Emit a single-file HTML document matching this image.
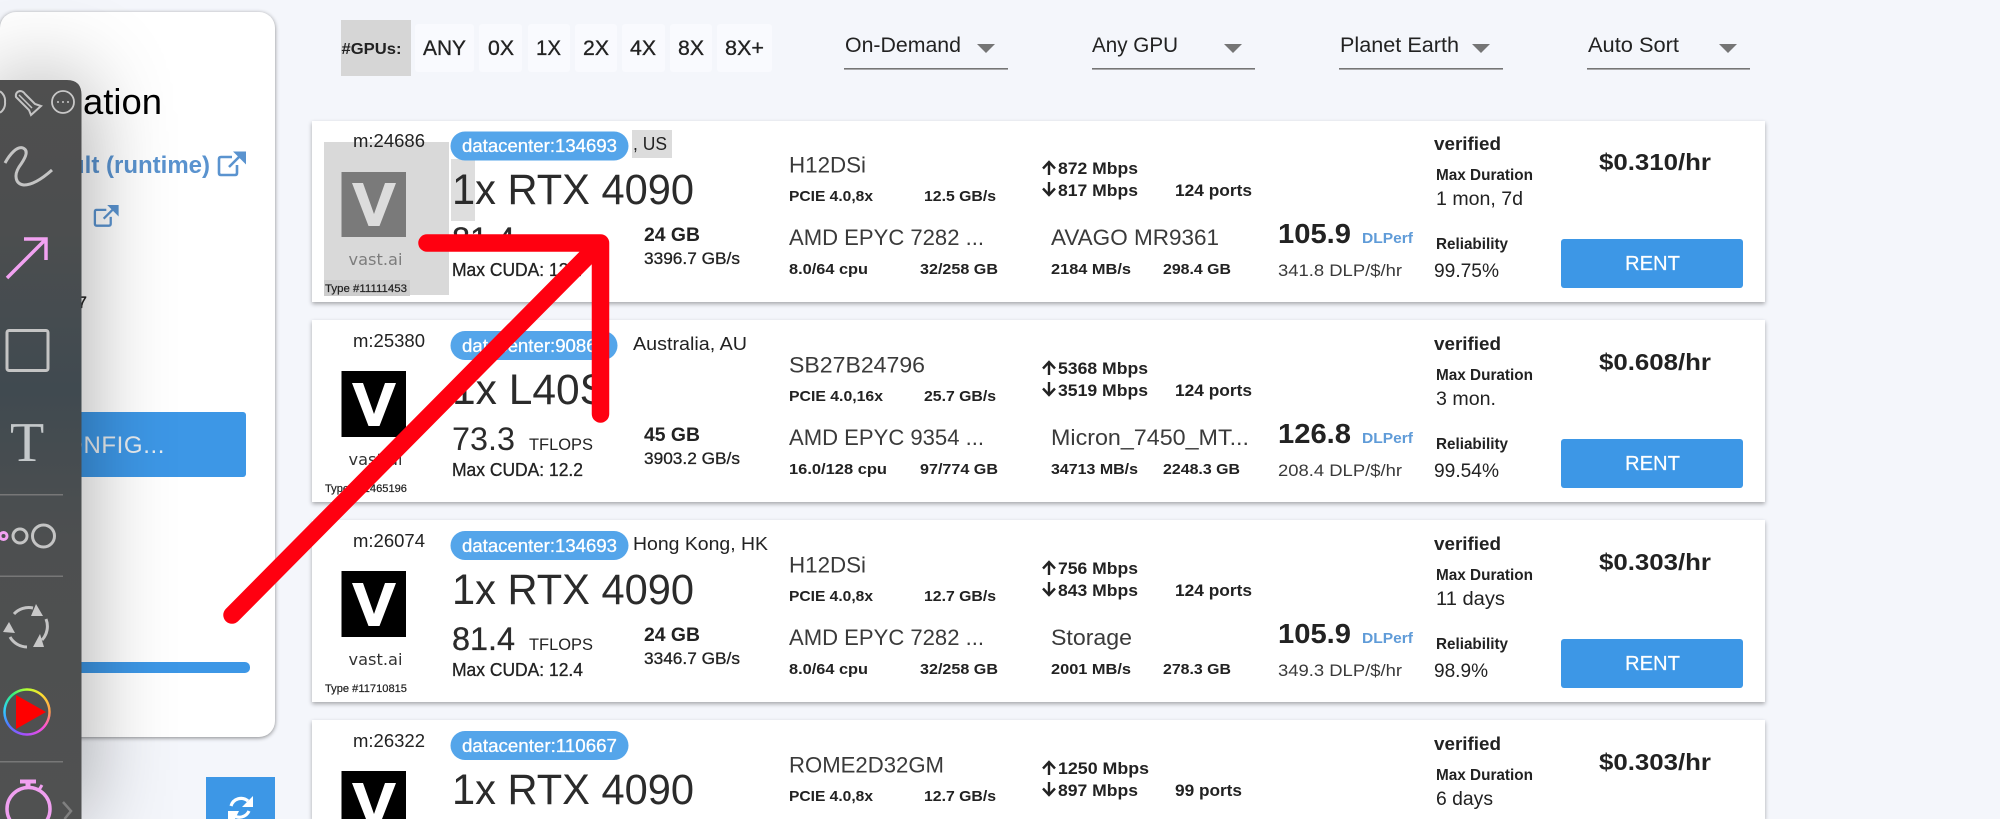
<!DOCTYPE html>
<html><head><meta charset="utf-8"><title>Vast.ai</title>
<style>
html,body{margin:0;padding:0;background:#f4f6fb;width:2000px;height:819px;overflow:hidden}
svg{display:block;position:absolute;left:0;top:0}
text{font-family:"Liberation Sans",sans-serif;fill:#222;white-space:pre}
.m{stroke:#222;stroke-width:.3px}
.b{font-weight:bold}
.lt{fill:#3a3a3a}
.card{fill:#fff;filter:drop-shadow(0 2px 2px rgba(0,0,0,.32))}
.mid{font-size:18px}
.loc{font-size:18.5px}
.pill{fill:#54a5ea}
.pt{font-size:18.5px;fill:#fff;stroke:#fff;stroke-width:.3px}
.gpu{font-size:43px;fill:#2b2b2b}
.tf{font-size:32px;fill:#2b2b2b}
.sm{font-size:15px}
.net{font-size:17px}
.big{font-size:22px}
.ar{fill:none;stroke:#222;stroke-width:2.4}
.rent{fill:#3d97e6}
.rt{font-size:20px;fill:#fff;stroke:#fff;stroke-width:.2px}
.ic{fill:none;stroke:#c4c4c4;stroke-width:3}
.lk{fill:none;stroke:#5a93cf;stroke-width:2.6}
</style></head><body>
<svg width="2000" height="819" viewBox="0 0 2000 819" xmlns="http://www.w3.org/2000/svg">
<defs>
<linearGradient id="tb" x1="0" y1="0" x2="0" y2="1"><stop offset="0" stop-color="#4f4f4f"/><stop offset=".2" stop-color="#4c4e4f"/><stop offset=".42" stop-color="#404a50"/><stop offset=".62" stop-color="#4d4f50"/><stop offset="1" stop-color="#505151"/></linearGradient>
<clipPath id="c4"><rect x="0" y="-5" width="2000" height="104"/></clipPath>
<clipPath id="cb"><rect x="0" y="0" width="2000" height="819"/></clipPath>
</defs>
<rect width="2000" height="819" fill="#f4f6fb"/>

<!-- left panel -->
<rect x="0" y="12" width="275" height="725" rx="16" fill="#fff" style="filter:drop-shadow(0 1px 2px rgba(0,0,0,.45))"/>
<text x="83" y="114" font-size="36" style="fill:#000" textLength="79" lengthAdjust="spacingAndGlyphs">ation</text>
<text x="210" y="173" text-anchor="end" font-size="24" class="b" style="fill:#5a93cf">default (runtime)</text>
<g id="lk1"><path class="lk" d="M237 165V173Q237 175 235 175H221Q219 175 219 173V159Q219 157 221 157H232"/><path class="lk" d="M229 167L242 154"/><polygon points="233,151.500 246,151.500 246,164.500" fill="#5a93cf"/></g>
<g transform="translate(94,205) scale(.88) translate(-218,-151.500)"><path class="lk" d="M237 165V173Q237 175 235 175H221Q219 175 219 173V159Q219 157 221 157H232"/><path class="lk" d="M229 167L242 154"/><polygon points="233,151.500 246,151.500 246,164.500" fill="#5a93cf"/></g>
<text x="87" y="308" text-anchor="end" font-size="17" class="m">0.7</text>
<rect x="0" y="412" width="246" height="65" rx="3" fill="#3d97e6"/>
<text x="165" y="453" text-anchor="end" font-size="24" style="fill:#e9edf0;letter-spacing:.6px">CONFIG...</text>
<rect x="0" y="662" width="250" height="11" rx="5" fill="#3d97e6"/>
<rect x="206" y="777" width="69" height="42" fill="#3d97e6"/>
<path d="M231 806A10.500 10.500 0 0 1 248 801" fill="none" stroke="#fff" stroke-width="3.200"/>
<polygon points="253,796 253,807 242,807" fill="#fff"/>
<path d="M249 811A10.500 10.500 0 0 1 233 815" fill="none" stroke="#fff" stroke-width="3.200"/>
<polygon points="228,819 228,811 239,811 235,819" fill="#fff"/>

<!-- top filters -->
<rect x="341" y="20" width="70" height="56" fill="#d6d6d6"/>
<text x="341.500" y="54" font-size="15.500" class="b" textLength="60" lengthAdjust="spacingAndGlyphs">#GPUs:</text>
<g fill="#f9fafe">
<rect x="415" y="24" width="59" height="48" rx="3"/><rect x="479" y="24" width="43" height="48" rx="3"/><rect x="528" y="24" width="42" height="48" rx="3"/><rect x="575" y="24" width="42" height="48" rx="3"/><rect x="622" y="24" width="43" height="48" rx="3"/><rect x="670" y="24" width="42" height="48" rx="3"/><rect x="717" y="24" width="55" height="48" rx="3"/>
</g>
<g font-size="21">
<text class="m" x="423" y="55" textLength="43" lengthAdjust="spacingAndGlyphs">ANY</text>
<text class="m" x="488" y="55" textLength="26" lengthAdjust="spacingAndGlyphs">0X</text>
<text class="m" x="536" y="55" textLength="25" lengthAdjust="spacingAndGlyphs">1X</text>
<text class="m" x="583" y="55" textLength="26" lengthAdjust="spacingAndGlyphs">2X</text>
<text class="m" x="630" y="55" textLength="26" lengthAdjust="spacingAndGlyphs">4X</text>
<text class="m" x="678" y="55" textLength="26" lengthAdjust="spacingAndGlyphs">8X</text>
<text class="m" x="725" y="55" textLength="39" lengthAdjust="spacingAndGlyphs">8X+</text>
</g>
<g font-size="21.500" style="fill:#333">
<text x="845" y="52" textLength="116" lengthAdjust="spacingAndGlyphs">On-Demand</text>
<text x="1092" y="52" textLength="86" lengthAdjust="spacingAndGlyphs">Any GPU</text>
<text x="1340" y="52" textLength="119" lengthAdjust="spacingAndGlyphs">Planet Earth</text>
<text x="1588" y="52" textLength="91" lengthAdjust="spacingAndGlyphs">Auto Sort</text>
</g>
<g fill="#757575">
<rect x="844" y="68" width="164" height="1.600"/><rect x="1092" y="68" width="163" height="1.600"/><rect x="1339" y="68" width="164" height="1.600"/><rect x="1587" y="68" width="163" height="1.600"/>
<polygon points="977,44 995,44 986,53"/><polygon points="1224,44 1242,44 1233,53"/><polygon points="1472,44 1490,44 1481,53"/><polygon points="1719,44 1737,44 1728,53"/>
</g>

<!-- CARD 1 -->
<g transform="translate(0,120)">
<rect class="card" x="312" y="1" width="1453" height="181"/>
<rect x="324" y="22" width="125" height="153" fill="#d9d9d9"/>
<rect x="451" y="39" width="24" height="62" fill="#dedede"/>
<rect x="632" y="10" width="40" height="28" fill="#dcdcdc"/>
<rect x="324" y="160" width="86" height="16" fill="#cdcdcd"/>
<text x="353" y="27" class="mid" textLength="72" lengthAdjust="spacingAndGlyphs">m:24686</text>
<rect x="341.500" y="52" width="64.500" height="65" fill="#7a7a7a"/>
<polygon points="352,63 363,63 374,94 385,63 396,63 379.500,106 368.500,106" fill="#dcdcdc"/>
<text x="348.500" y="145" font-size="16" style="font-family:'DejaVu Sans',sans-serif;fill:#7d7d7d" textLength="54" lengthAdjust="spacingAndGlyphs">vast.ai</text>
<text x="325" y="172" font-size="11" class="m" textLength="82" lengthAdjust="spacingAndGlyphs" style="stroke-width:.2px">Type #11111453</text>
<rect class="pill" x="450.500" y="11.500" width="178" height="29" rx="14.500"/>
<text class="pt" x="462" y="32" textLength="155" lengthAdjust="spacingAndGlyphs">datacenter:134693</text>
<text class="loc" x="633" y="30" textLength="34" lengthAdjust="spacingAndGlyphs">, US</text>
<text class="gpu" x="452" y="84" textLength="242" lengthAdjust="spacingAndGlyphs">1x RTX 4090</text>
<text class="tf m" x="452" y="130" textLength="63" lengthAdjust="spacingAndGlyphs">81.4</text>
<text x="529" y="130" font-size="17" textLength="64" lengthAdjust="spacingAndGlyphs">TFLOPS</text>
<text class="mid m" x="452" y="156" textLength="131" lengthAdjust="spacingAndGlyphs">Max CUDA: 12.4</text>
<text class="b" x="644" y="121" font-size="19" textLength="56" lengthAdjust="spacingAndGlyphs">24 GB</text>
<text class="m" x="644" y="144" font-size="17" textLength="96" lengthAdjust="spacingAndGlyphs">3396.7 GB/s</text>
<text class="big lt" x="789" y="52.500" textLength="77" lengthAdjust="spacingAndGlyphs">H12DSi</text>
<text class="sm b" x="789" y="81" textLength="84" lengthAdjust="spacingAndGlyphs">PCIE 4.0,8x</text>
<text class="sm b" x="924" y="81" textLength="72" lengthAdjust="spacingAndGlyphs">12.5 GB/s</text>
<path class="ar" d="M1049 55V42M1043 48.500L1049 42L1055 48.500"/><text class="net b" x="1058" y="54" textLength="80" lengthAdjust="spacingAndGlyphs">872 Mbps</text>
<path class="ar" d="M1049 62V75M1043 68.500L1049 75L1055 68.500"/><text class="net b" x="1058" y="76" textLength="80" lengthAdjust="spacingAndGlyphs">817 Mbps</text>
<text class="net b" x="1175" y="76" textLength="77" lengthAdjust="spacingAndGlyphs">124 ports</text>
<text class="big lt" x="789" y="125" textLength="195" lengthAdjust="spacingAndGlyphs">AMD EPYC 7282 ...</text>
<text class="sm b" x="789" y="154" textLength="79" lengthAdjust="spacingAndGlyphs">8.0/64 cpu</text>
<text class="sm b" x="920" y="154" textLength="78" lengthAdjust="spacingAndGlyphs">32/258 GB</text>
<text class="big lt" x="1051" y="125" textLength="168" lengthAdjust="spacingAndGlyphs">AVAGO MR9361</text>
<text class="sm b" x="1051" y="154" textLength="80" lengthAdjust="spacingAndGlyphs">2184 MB/s</text>
<text class="sm b" x="1163" y="154" textLength="68" lengthAdjust="spacingAndGlyphs">298.4 GB</text>
<text class="b" x="1278" y="123" font-size="28" textLength="73" lengthAdjust="spacingAndGlyphs">105.9</text>
<text class="b" x="1362" y="123" font-size="15" style="fill:#5f9bd8" textLength="51" lengthAdjust="spacingAndGlyphs">DLPerf</text>
<text class="lt" x="1278" y="156" font-size="17" textLength="124" lengthAdjust="spacingAndGlyphs">341.8 DLP/$/hr</text>
<text class="b" x="1434" y="30" font-size="18.500" textLength="67" lengthAdjust="spacingAndGlyphs">verified</text>
<text class="b" x="1436" y="60" font-size="15.500" textLength="97" lengthAdjust="spacingAndGlyphs">Max Duration</text>
<text x="1436" y="85" font-size="19" textLength="87" lengthAdjust="spacingAndGlyphs">1 mon, 7d</text>
<text class="b" x="1436" y="129" font-size="15.500" textLength="72" lengthAdjust="spacingAndGlyphs">Reliability</text>
<text x="1434" y="157" font-size="19.500" textLength="65" lengthAdjust="spacingAndGlyphs">99.75%</text>
<text class="b" x="1599" y="50" font-size="23" textLength="112" lengthAdjust="spacingAndGlyphs">$0.310/hr</text>
<rect class="rent" x="1561" y="119" width="182" height="49" rx="3"/>
<text class="rt" x="1625" y="150" textLength="55" lengthAdjust="spacingAndGlyphs">RENT</text>
</g>

<!-- CARD 2 -->
<g transform="translate(0,320)">
<rect class="card" x="312" y="0" width="1453" height="182"/>
<text x="353" y="27" class="mid" textLength="72" lengthAdjust="spacingAndGlyphs">m:25380</text>
<rect x="341.500" y="51" width="64.500" height="66" fill="#000"/>
<polygon points="352,63 363,63 374,94 385,63 396,63 379.500,106 368.500,106" fill="#fff"/>
<text x="348.500" y="145" font-size="16" style="font-family:'DejaVu Sans',sans-serif;fill:#333" textLength="54" lengthAdjust="spacingAndGlyphs">vast.ai</text>
<text x="325" y="172" font-size="11" class="m" textLength="82" lengthAdjust="spacingAndGlyphs" style="stroke-width:.2px">Type #11465196</text>
<rect class="pill" x="450.500" y="11" width="167" height="29" rx="14.500"/>
<text class="pt" x="462" y="32" textLength="145" lengthAdjust="spacingAndGlyphs">datacenter:90865</text>
<text class="loc" x="633" y="30" textLength="114" lengthAdjust="spacingAndGlyphs">Australia, AU</text>
<text class="gpu" x="452" y="84" textLength="156" lengthAdjust="spacingAndGlyphs">1x L40S</text>
<text class="tf" x="452" y="130" textLength="63" lengthAdjust="spacingAndGlyphs">73.3</text>
<text x="529" y="130" font-size="17" textLength="64" lengthAdjust="spacingAndGlyphs">TFLOPS</text>
<text class="mid m" x="452" y="156" textLength="131" lengthAdjust="spacingAndGlyphs">Max CUDA: 12.2</text>
<text class="b" x="644" y="121" font-size="19" textLength="56" lengthAdjust="spacingAndGlyphs">45 GB</text>
<text class="m" x="644" y="144" font-size="17" textLength="96" lengthAdjust="spacingAndGlyphs">3903.2 GB/s</text>
<text class="big lt" x="789" y="52.500" textLength="136" lengthAdjust="spacingAndGlyphs">SB27B24796</text>
<text class="sm b" x="789" y="81" textLength="94" lengthAdjust="spacingAndGlyphs">PCIE 4.0,16x</text>
<text class="sm b" x="924" y="81" textLength="72" lengthAdjust="spacingAndGlyphs">25.7 GB/s</text>
<path class="ar" d="M1049 55V42M1043 48.500L1049 42L1055 48.500"/><text class="net b" x="1058" y="54" textLength="90" lengthAdjust="spacingAndGlyphs">5368 Mbps</text>
<path class="ar" d="M1049 62V75M1043 68.500L1049 75L1055 68.500"/><text class="net b" x="1058" y="76" textLength="90" lengthAdjust="spacingAndGlyphs">3519 Mbps</text>
<text class="net b" x="1175" y="76" textLength="77" lengthAdjust="spacingAndGlyphs">124 ports</text>
<text class="big lt" x="789" y="125" textLength="195" lengthAdjust="spacingAndGlyphs">AMD EPYC 9354 ...</text>
<text class="sm b" x="789" y="154" textLength="98" lengthAdjust="spacingAndGlyphs">16.0/128 cpu</text>
<text class="sm b" x="920" y="154" textLength="78" lengthAdjust="spacingAndGlyphs">97/774 GB</text>
<text class="big lt" x="1051" y="125" textLength="198" lengthAdjust="spacingAndGlyphs">Micron_7450_MT...</text>
<text class="sm b" x="1051" y="154" textLength="87" lengthAdjust="spacingAndGlyphs">34713 MB/s</text>
<text class="sm b" x="1163" y="154" textLength="77" lengthAdjust="spacingAndGlyphs">2248.3 GB</text>
<text class="b" x="1278" y="123" font-size="28" textLength="73" lengthAdjust="spacingAndGlyphs">126.8</text>
<text class="b" x="1362" y="123" font-size="15" style="fill:#5f9bd8" textLength="51" lengthAdjust="spacingAndGlyphs">DLPerf</text>
<text class="lt" x="1278" y="156" font-size="17" textLength="124" lengthAdjust="spacingAndGlyphs">208.4 DLP/$/hr</text>
<text class="b" x="1434" y="30" font-size="18.500" textLength="67" lengthAdjust="spacingAndGlyphs">verified</text>
<text class="b" x="1436" y="60" font-size="15.500" textLength="97" lengthAdjust="spacingAndGlyphs">Max Duration</text>
<text x="1436" y="85" font-size="19" textLength="60" lengthAdjust="spacingAndGlyphs">3 mon.</text>
<text class="b" x="1436" y="129" font-size="15.500" textLength="72" lengthAdjust="spacingAndGlyphs">Reliability</text>
<text x="1434" y="157" font-size="19.500" textLength="65" lengthAdjust="spacingAndGlyphs">99.54%</text>
<text class="b" x="1599" y="50" font-size="23" textLength="112" lengthAdjust="spacingAndGlyphs">$0.608/hr</text>
<rect class="rent" x="1561" y="119" width="182" height="49" rx="3"/>
<text class="rt" x="1625" y="150" textLength="55" lengthAdjust="spacingAndGlyphs">RENT</text>
</g>

<!-- CARD 3 -->
<g transform="translate(0,520)">
<rect class="card" x="312" y="0" width="1453" height="182"/>
<text x="353" y="27" class="mid" textLength="72" lengthAdjust="spacingAndGlyphs">m:26074</text>
<rect x="341.500" y="51" width="64.500" height="66" fill="#000"/>
<polygon points="352,63 363,63 374,94 385,63 396,63 379.500,106 368.500,106" fill="#fff"/>
<text x="348.500" y="145" font-size="16" style="font-family:'DejaVu Sans',sans-serif;fill:#333" textLength="54" lengthAdjust="spacingAndGlyphs">vast.ai</text>
<text x="325" y="172" font-size="11" class="m" textLength="82" lengthAdjust="spacingAndGlyphs" style="stroke-width:.2px">Type #11710815</text>
<rect class="pill" x="450.500" y="11" width="178" height="29" rx="14.500"/>
<text class="pt" x="462" y="32" textLength="155" lengthAdjust="spacingAndGlyphs">datacenter:134693</text>
<text class="loc" x="633" y="30" textLength="135" lengthAdjust="spacingAndGlyphs">Hong Kong, HK</text>
<text class="gpu" x="452" y="84" textLength="242" lengthAdjust="spacingAndGlyphs">1x RTX 4090</text>
<text class="tf m" x="452" y="130" textLength="63" lengthAdjust="spacingAndGlyphs">81.4</text>
<text x="529" y="130" font-size="17" textLength="64" lengthAdjust="spacingAndGlyphs">TFLOPS</text>
<text class="mid m" x="452" y="156" textLength="131" lengthAdjust="spacingAndGlyphs">Max CUDA: 12.4</text>
<text class="b" x="644" y="121" font-size="19" textLength="56" lengthAdjust="spacingAndGlyphs">24 GB</text>
<text class="m" x="644" y="144" font-size="17" textLength="96" lengthAdjust="spacingAndGlyphs">3346.7 GB/s</text>
<text class="big lt" x="789" y="52.500" textLength="77" lengthAdjust="spacingAndGlyphs">H12DSi</text>
<text class="sm b" x="789" y="81" textLength="84" lengthAdjust="spacingAndGlyphs">PCIE 4.0,8x</text>
<text class="sm b" x="924" y="81" textLength="72" lengthAdjust="spacingAndGlyphs">12.7 GB/s</text>
<path class="ar" d="M1049 55V42M1043 48.500L1049 42L1055 48.500"/><text class="net b" x="1058" y="54" textLength="80" lengthAdjust="spacingAndGlyphs">756 Mbps</text>
<path class="ar" d="M1049 62V75M1043 68.500L1049 75L1055 68.500"/><text class="net b" x="1058" y="76" textLength="80" lengthAdjust="spacingAndGlyphs">843 Mbps</text>
<text class="net b" x="1175" y="76" textLength="77" lengthAdjust="spacingAndGlyphs">124 ports</text>
<text class="big lt" x="789" y="125" textLength="195" lengthAdjust="spacingAndGlyphs">AMD EPYC 7282 ...</text>
<text class="sm b" x="789" y="154" textLength="79" lengthAdjust="spacingAndGlyphs">8.0/64 cpu</text>
<text class="sm b" x="920" y="154" textLength="78" lengthAdjust="spacingAndGlyphs">32/258 GB</text>
<text class="big lt" x="1051" y="125" textLength="81" lengthAdjust="spacingAndGlyphs">Storage</text>
<text class="sm b" x="1051" y="154" textLength="80" lengthAdjust="spacingAndGlyphs">2001 MB/s</text>
<text class="sm b" x="1163" y="154" textLength="68" lengthAdjust="spacingAndGlyphs">278.3 GB</text>
<text class="b" x="1278" y="123" font-size="28" textLength="73" lengthAdjust="spacingAndGlyphs">105.9</text>
<text class="b" x="1362" y="123" font-size="15" style="fill:#5f9bd8" textLength="51" lengthAdjust="spacingAndGlyphs">DLPerf</text>
<text class="lt" x="1278" y="156" font-size="17" textLength="124" lengthAdjust="spacingAndGlyphs">349.3 DLP/$/hr</text>
<text class="b" x="1434" y="30" font-size="18.500" textLength="67" lengthAdjust="spacingAndGlyphs">verified</text>
<text class="b" x="1436" y="60" font-size="15.500" textLength="97" lengthAdjust="spacingAndGlyphs">Max Duration</text>
<text x="1436" y="85" font-size="19" textLength="69" lengthAdjust="spacingAndGlyphs">11 days</text>
<text class="b" x="1436" y="129" font-size="15.500" textLength="72" lengthAdjust="spacingAndGlyphs">Reliability</text>
<text x="1434" y="157" font-size="19.500" textLength="54" lengthAdjust="spacingAndGlyphs">98.9%</text>
<text class="b" x="1599" y="50" font-size="23" textLength="112" lengthAdjust="spacingAndGlyphs">$0.303/hr</text>
<rect class="rent" x="1561" y="119" width="182" height="49" rx="3"/>
<text class="rt" x="1625" y="150" textLength="55" lengthAdjust="spacingAndGlyphs">RENT</text>
</g>

<!-- CARD 4 -->
<g transform="translate(0,720)" clip-path="url(#c4)">
<rect class="card" x="312" y="0" width="1453" height="99"/>
<text x="353" y="27" class="mid" textLength="72" lengthAdjust="spacingAndGlyphs">m:26322</text>
<rect x="341.500" y="51" width="64.500" height="48" fill="#000"/>
<polygon points="352,63 363,63 374,94 385,63 396,63 382,99 366,99" fill="#fff"/>
<rect class="pill" x="450.500" y="11" width="178" height="29" rx="14.500"/>
<text class="pt" x="462" y="32" textLength="155" lengthAdjust="spacingAndGlyphs">datacenter:110667</text>
<text class="gpu" x="452" y="84" textLength="242" lengthAdjust="spacingAndGlyphs">1x RTX 4090</text>
<text class="big lt" x="789" y="52.500" textLength="155" lengthAdjust="spacingAndGlyphs">ROME2D32GM</text>
<text class="sm b" x="789" y="81" textLength="84" lengthAdjust="spacingAndGlyphs">PCIE 4.0,8x</text>
<text class="sm b" x="924" y="81" textLength="72" lengthAdjust="spacingAndGlyphs">12.7 GB/s</text>
<path class="ar" d="M1049 55V42M1043 48.500L1049 42L1055 48.500"/><text class="net b" x="1058" y="54" textLength="91" lengthAdjust="spacingAndGlyphs">1250 Mbps</text>
<path class="ar" d="M1049 62V75M1043 68.500L1049 75L1055 68.500"/><text class="net b" x="1058" y="76" textLength="80" lengthAdjust="spacingAndGlyphs">897 Mbps</text>
<text class="net b" x="1175" y="76" textLength="67" lengthAdjust="spacingAndGlyphs">99 ports</text>
<text class="b" x="1434" y="30" font-size="18.500" textLength="67" lengthAdjust="spacingAndGlyphs">verified</text>
<text class="b" x="1436" y="60" font-size="15.500" textLength="97" lengthAdjust="spacingAndGlyphs">Max Duration</text>
<text x="1436" y="85" font-size="19" textLength="57" lengthAdjust="spacingAndGlyphs">6 days</text>
<text class="b" x="1599" y="50" font-size="23" textLength="112" lengthAdjust="spacingAndGlyphs">$0.303/hr</text>
</g>

<!-- toolbar -->
<path d="M0 80H67Q81.500 80 81.500 95V819H0Z" fill="url(#tb)" style="filter:drop-shadow(0 0 44px rgba(0,0,0,.38))"/>
<path d="M0 91.300A11 11 0 0 1 5 102A11 11 0 0 1 0 112.700" fill="none" stroke="#c4c4c4" stroke-width="2"/>
<path d="M16 97Q15 92 20 91Q23 91 25 94L35 104L41 106L31 115L29 110L18 99Z" fill="none" stroke="#c4c4c4" stroke-width="2"/>
<path d="M19 95L32 108" fill="none" stroke="#c4c4c4" stroke-width="1.500"/>
<circle cx="63" cy="102" r="11" fill="none" stroke="#c8c8c8" stroke-width="1.800"/>
<g fill="#c8c8c8"><circle cx="58" cy="102" r="1"/><circle cx="63" cy="102" r="1"/><circle cx="68" cy="102" r="1"/></g>
<path class="ic" d="M5 163C10 154 17 146 23 148C30 151 24 160 19 167C14 175 15 184 24 185C33 185 43 178 52 170" stroke="#bdbdbd"/>
<path d="M7 278L46 239M24 239H46V260" fill="none" stroke="#f2a2f2" stroke-width="3.500"/>
<rect class="ic" x="7" y="330.500" width="41" height="40" rx="2"/>
<text x="10" y="461" font-size="56" style="font-family:'Liberation Serif',serif;fill:#c4c8ca">T</text>
<g fill="#777"><rect x="0" y="494" width="63" height="1.500"/><rect x="0" y="575.500" width="63" height="1.500"/><rect x="0" y="761" width="63" height="1.500"/></g>
<circle cx="3.500" cy="536" r="3.500" fill="none" stroke="#f2a2f2" stroke-width="3"/>
<circle cx="20" cy="536" r="7" class="ic"/>
<circle cx="43.500" cy="536" r="11" class="ic"/>
<path class="ic" d="M14 614A20 20 0 0 1 33 608"/>
<path class="ic" d="M46 619A20 20 0 0 1 42 640"/>
<path class="ic" d="M27 647A20 20 0 0 1 10 637"/>
<g fill="#c8c8c8"><polygon points="36,604 43,616 31,616"/><polygon points="9,622 15,633 3,632"/><polygon points="33,647 44,647 40,634"/></g>
<foreignObject x="3" y="688" width="48" height="48"><div xmlns="http://www.w3.org/1999/xhtml" style="width:48px;height:48px;border-radius:50%;background:conic-gradient(#b8ff30,#ffe030 40deg,#ff9a50 90deg,#ff50d8 130deg,#a050ff 190deg,#5078ff 235deg,#30d0ff 275deg,#30f080 320deg,#b8ff30);-webkit-mask:radial-gradient(circle,transparent 21px,#000 21.500px,#000 23.500px,transparent 24px);mask:radial-gradient(circle,transparent 21px,#000 21.500px,#000 23.500px,transparent 24px)"></div></foreignObject>
<polygon points="16,695 46,712 16,729" fill="#ff0000"/>
<g fill="none" stroke="#f0a0f0" clip-path="url(#cb)"><circle cx="28.500" cy="809" r="21.500" stroke-width="3.500"/><path d="M28 781V788" stroke-width="5"/><path d="M20 781.500H36" stroke-width="4"/><path d="M39 790L42 785" stroke-width="3"/></g>
<path d="M63 802L71 811L64.500 819" fill="none" stroke="#808080" stroke-width="2.500"/>

<!-- red annotation arrow -->
<path d="M232 615L600.500 243M427 243H600.500V414" fill="none" stroke="#ff0010" stroke-width="17.500" stroke-linecap="round" stroke-linejoin="round"/>
</svg>
</body></html>
